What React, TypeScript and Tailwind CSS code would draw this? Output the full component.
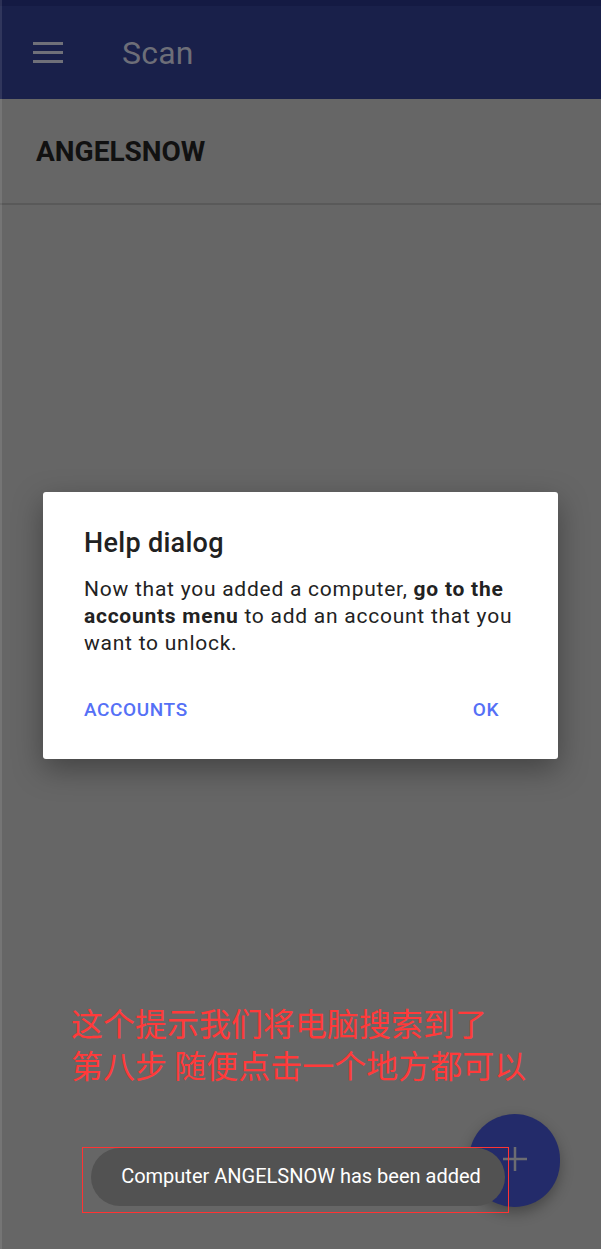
import React from 'react';

function Hamburger() {
  return (
    <div className="flex flex-col gap-[6px] w-[30px]">
      <span className="block h-[3px] w-full bg-[#6f7079]" />
      <span className="block h-[3px] w-full bg-[#6f7079]" />
      <span className="block h-[3px] w-full bg-[#6f7079]" />
    </div>
  );
}

function HelpDialog() {
  return (
    <div className="absolute left-[43px] top-[492px] w-[515px] h-[267px] bg-white rounded-[3px] shadow-[0_10px_30px_rgba(0,0,0,0.35)] flex flex-col pl-[41px] pr-[30px]">
      <h2 className="mt-[34px] text-[27px] leading-[34px] font-medium text-[#212121] tracking-[0.3px]">Help dialog</h2>
      <p className="mt-[16px] text-[21px] leading-[27px] text-[#222] tracking-[0.75px] whitespace-nowrap">
        Now that you added a computer, <b className="font-bold">go to the</b>
        <br />
        <b className="font-bold">accounts menu</b> to add an account that you
        <br />
        want to unlock.
      </p>
      <div className="mt-[39px] flex justify-between pr-[29px] text-[19px] font-medium text-[#5570f6] tracking-[0.6px]">
        <span>ACCOUNTS</span>
        <span>OK</span>
      </div>
    </div>
  );
}

export default function App() {
  return (
    <div className="relative w-[601px] h-[1249px] overflow-hidden bg-[#666666] flex flex-col font-['Roboto','Liberation_Sans',sans-serif]">
      <div className="h-[6px] bg-[#141a43]" />
      <header className="h-[93px] bg-[#19204a] flex items-center pl-[33px]">
        <Hamburger />
        <span className="ml-[59px] text-[32px] text-[#6d6e78] tracking-[0.2px]">Scan</span>
      </header>
      <div className="h-[106px] flex items-center pl-[36px] border-b-2 border-[#595959]">
        <span className="text-[28px] font-bold text-[#111] mt-[2px]">ANGELSNOW</span>
      </div>
      <div className="flex-1" />

      <div className="absolute left-0 top-0 bottom-0 w-[2px] bg-white/10" />

      <HelpDialog />

      <div className="absolute left-[71px] top-[1001px] text-[32px] leading-[42px] text-[#ff3a3a] font-['Noto_Sans_CJK_SC',sans-serif]">
        <div>这个提示我们将电脑搜索到了</div>
        <div>第八步 随便点击一个地方都可以</div>
      </div>

      <div className="absolute left-[469px] top-[1114px] w-[91px] h-[93px] rounded-full bg-[#232b6a] shadow-[0_6px_14px_rgba(0,0,0,0.3)] flex items-center justify-center">
        <svg width="28" height="28" viewBox="0 0 28 28" className="-mt-[4px]">
          <path d="M14 2v24M2 14h24" stroke="#6c6c72" strokeWidth="2.5" />
        </svg>
      </div>

      <div className="absolute left-[91px] top-[1148px] w-[414px] h-[58px] rounded-full bg-[#525252] flex items-center justify-center pl-[6px] pb-[3px]">
        <span className="text-[20px] text-white">Computer ANGELSNOW has been added</span>
      </div>
      <div className="absolute left-[82px] top-[1147px] w-[427px] h-[66px] border border-[#ff3333]" />
    </div>
  );
}
